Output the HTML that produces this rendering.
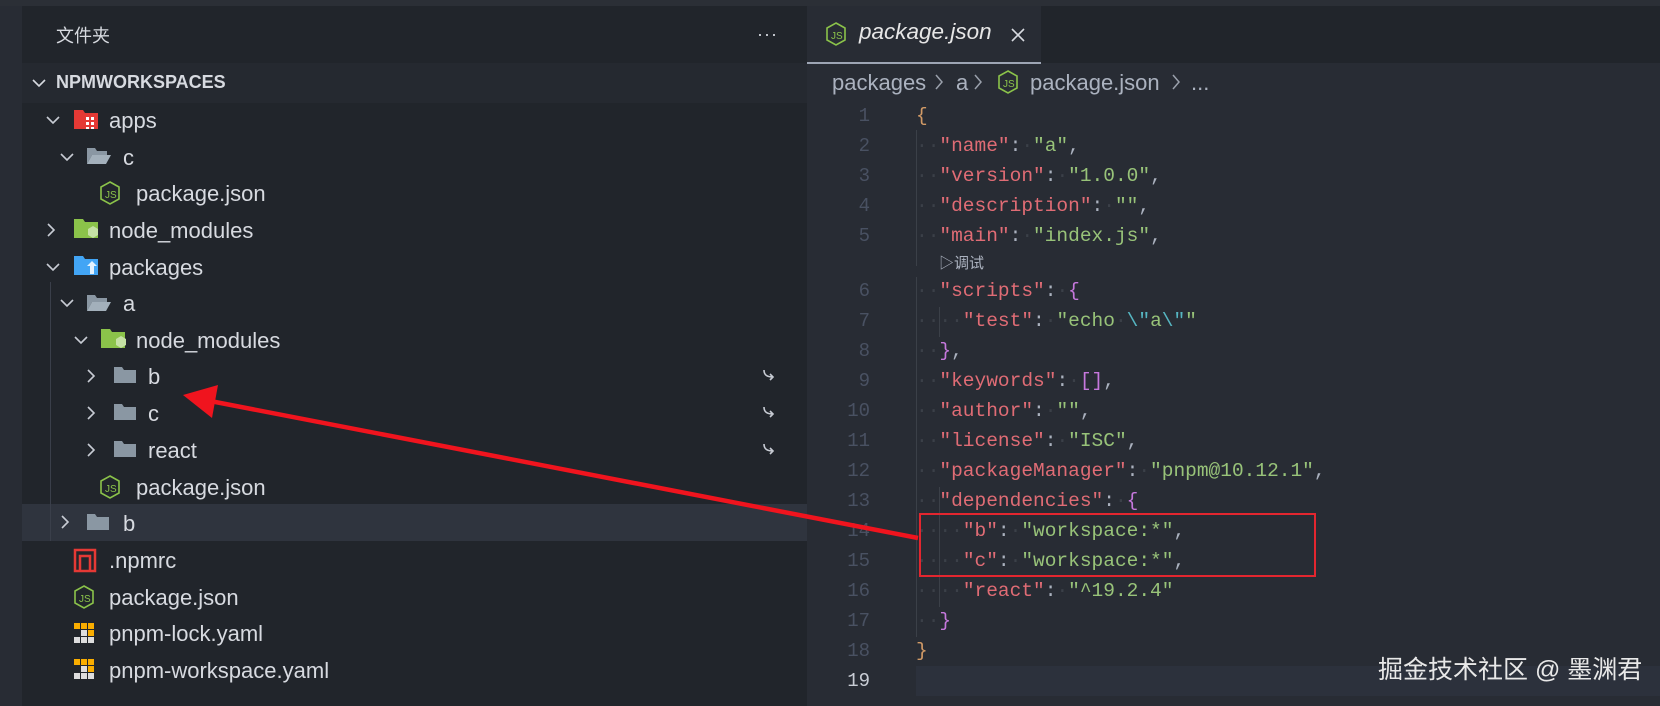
<!DOCTYPE html>
<html><head><meta charset="utf-8"><style>
*{margin:0;padding:0;box-sizing:border-box}
body{width:1660px;height:706px;background:#282c34;position:relative;overflow:hidden;font-family:"Liberation Sans","Noto Sans CJK SC",sans-serif;color:#d7dae0}
.abs{position:absolute}
#side{left:22px;top:6px;width:785px;height:700px;background:#21252b}
.row{position:absolute;left:22px;width:785px;height:37px;font-size:22px;line-height:37px;color:#d7dae0;white-space:nowrap}
.row>*{position:absolute;top:0}
.code{position:absolute;left:916px;font-family:"Liberation Mono",monospace;font-size:19.5px;white-space:pre;color:#abb2bf;line-height:30px;height:30px}
.ln{position:absolute;left:820px;width:50px;text-align:right;font-family:"Liberation Mono",monospace;font-size:19px;color:#495162;line-height:30px}
.k{color:#e06c75}.s{color:#98c379}.o{color:#d19a66}.p{color:#c678dd}.e{color:#56b6c2}.d{color:#3b4048}
.bc{position:absolute;top:68px;font-size:22px;color:#abb2bf;line-height:30px;white-space:nowrap}
</style></head><body>
<div class="abs" style="left:0;top:0;width:1660px;height:6px;background:#2b2f36"></div>
<div id="side" class="abs"></div>
<div class="abs" style="left:56px;top:22px;font-size:18px;color:#d7dae0">文件夹</div>
<div class="abs" style="left:757px;top:24px;font-size:18px;color:#d7dae0;letter-spacing:1px">···</div>
<div class="abs" style="left:22px;top:63px;width:785px;height:40px;background:#252930"></div>
<svg class="abs" style="left:32px;top:76px" width="14" height="14"><path d="M1 4l6 6 6-6" stroke="#d7dae0" stroke-width="1.6" fill="none"/></svg>
<div class="abs" style="left:56px;top:69px;font-size:18px;font-weight:bold;color:#d7dae0;line-height:26px">NPMWORKSPACES</div>
<div class="abs" style="left:22px;top:504px;width:785px;height:37px;background:#2f343e"></div>
<div class="abs" style="left:50px;top:282px;width:1px;height:259px;background:#3a3f4a"></div>

<svg class="abs" style="left:0;top:0" width="807" height="706" fill="none">
<defs>
<g id="down"><path d="M0 0l6 6 6-6" stroke="#c8ccd4" stroke-width="1.6"/></g>
<g id="right"><path d="M0 0l6 6-6 6" stroke="#c8ccd4" stroke-width="1.6"/></g>
<g id="fold"><path d="M0 2h8l2 3h12v13H0z" fill="#8a97a3"/></g>
<g id="fopen"><path d="M0 2h8l2 3h10v4H5L0 18z" fill="#8a97a3"/><path d="M5 9h19l-5 9H0z" fill="#a3b0bb"/></g>
<g id="js"><path d="M11 1l9 5v12l-9 5-9-5V6z" stroke="#8bc34a" stroke-width="1.6"/><text x="6" y="17" font-size="10" fill="#8bc34a" font-family="Liberation Sans">JS</text></g>
</defs>
<use href="#down" x="47" y="117"/>
<path d="M74 110h9l2 3h13v16H74z" fill="#e53935"/><g fill="#fff"><rect x="86" y="117" width="3" height="3"/><rect x="91" y="117" width="3" height="3"/><rect x="86" y="122" width="3" height="3"/><rect x="91" y="122" width="3" height="3"/><rect x="91" y="127" width="3" height="2"/><rect x="86" y="127" width="3" height="2"/></g>
<use href="#down" x="61" y="154"/><use href="#fopen" x="87" y="146"/>
<use href="#js" x="99" y="181"/>
<use href="#right" x="48" y="224"/>
<path d="M74 219h9l2 3h13v16H74z" fill="#8bc34a"/><path d="M93 226l5 3v6l-5 3-5-3v-6z" fill="#c5e1a5"/>
<use href="#down" x="47" y="264"/>
<path d="M74 256h9l2 3h13v16H74z" fill="#42a5f5"/><path d="M92 261l5 5h-3v8h-4v-8h-3z" fill="#e3f2fd"/>
<use href="#down" x="61" y="300"/><use href="#fopen" x="87" y="293"/>
<use href="#down" x="75" y="337"/>
<path d="M101 329h9l2 3h13v16h-24z" fill="#8bc34a"/><path d="M121 336l5 3v6l-5 3-5-3v-6z" fill="#c5e1a5"/>
<use href="#right" x="88" y="370"/><use href="#fold" x="114" y="365"/>
<use href="#right" x="88" y="407"/><use href="#fold" x="114" y="402"/>
<use href="#right" x="88" y="444"/><use href="#fold" x="114" y="439"/>
<use href="#js" x="99" y="475"/>
<use href="#right" x="62" y="516"/><use href="#fold" x="87" y="512"/>
<rect x="75" y="550" width="20" height="21" stroke="#e53935" stroke-width="2.5"/><path d="M80 571v-15h10v15" stroke="#e53935" stroke-width="2.5"/>
<use href="#js" x="73" y="585"/>
<g id="pn"><rect x="74" y="623" width="6" height="6" fill="#f9ad00"/><rect x="81" y="623" width="6" height="6" fill="#f9ad00"/><rect x="88" y="623" width="6" height="6" fill="#f9ad00"/><rect x="88" y="630" width="6" height="6" fill="#f9ad00"/><rect x="74" y="637" width="6" height="6" fill="#ddd"/><rect x="81" y="637" width="6" height="6" fill="#ddd"/><rect x="88" y="637" width="6" height="6" fill="#ddd"/><rect x="81" y="630" width="6" height="6" fill="#ddd"/></g>
<use href="#pn" x="0" y="36"/>
<g stroke="#c8ccd4" stroke-width="1.6"><path d="M764 370c0 5 3 7 9 7m-3-3l3 3-3 3"/><path d="M764 407c0 5 3 7 9 7m-3-3l3 3-3 3"/><path d="M764 444c0 5 3 7 9 7m-3-3l3 3-3 3"/></g>
</svg>
<div class="row" style="top:102px"><span style="left:87px">apps</span></div>
<div class="row" style="top:139px"><span style="left:101px">c</span></div>
<div class="row" style="top:175px"><span style="left:114px">package.json</span></div>
<div class="row" style="top:212px"><span style="left:87px">node_modules</span></div>
<div class="row" style="top:249px"><span style="left:87px">packages</span></div>
<div class="row" style="top:285px"><span style="left:101px">a</span></div>
<div class="row" style="top:322px"><span style="left:114px">node_modules</span></div>
<div class="row" style="top:358px"><span style="left:126px">b</span></div>
<div class="row" style="top:395px"><span style="left:126px">c</span></div>
<div class="row" style="top:432px"><span style="left:126px">react</span></div>
<div class="row" style="top:469px"><span style="left:114px">package.json</span></div>
<div class="row" style="top:505px"><span style="left:101px">b</span></div>
<div class="row" style="top:542px"><span style="left:87px">.npmrc</span></div>
<div class="row" style="top:579px"><span style="left:87px">package.json</span></div>
<div class="row" style="top:615px"><span style="left:87px">pnpm-lock.yaml</span></div>
<div class="row" style="top:652px"><span style="left:87px">pnpm-workspace.yaml</span></div>

<!-- editor -->
<div class="abs" style="left:807px;top:6px;width:853px;height:57px;background:#21252b"></div>
<div class="abs" style="left:807px;top:6px;width:234px;height:58px;background:#282c34;border-bottom:2px solid #9da5b4"></div>
<svg class="abs" style="left:825px;top:22px" width="24" height="26" fill="none"><path d="M11 1l9 5v12l-9 5-9-5V6z" stroke="#8bc34a" stroke-width="1.6"/><text x="6" y="17" font-size="10" fill="#8bc34a" font-family="Liberation Sans">JS</text></svg>
<div class="abs" style="left:859px;top:19px;font-size:22.5px;font-style:italic;color:#e6e6e6">package.json</div>
<svg class="abs" style="left:1010px;top:27px" width="16" height="16"><path d="M2 2l12 12M14 2L2 14" stroke="#d7dae0" stroke-width="1.6"/></svg>
<div class="bc" style="left:832px">packages</div>
<div class="bc" style="left:956px">a</div>
<div class="bc" style="left:1030px">package.json</div>
<div class="bc" style="left:1191px">...</div>
<svg class="abs" style="left:0;top:0" width="1660" height="110" fill="none" stroke="#9aa0ab" stroke-width="1.5">
<path d="M936 75l6 7-6 7M975 75l6 7-6 7M1173 75l6 7-6 7"/>
</svg>
<svg class="abs" style="left:997px;top:70px" width="24" height="26" fill="none"><path d="M11 1l9 5v12l-9 5-9-5V6z" stroke="#8bc34a" stroke-width="1.6"/><text x="6" y="17" font-size="10" fill="#8bc34a" font-family="Liberation Sans">JS</text></svg>

<div class="abs" style="left:916px;top:666px;width:744px;height:30px;background:#2c313c"></div>
<div class="abs" style="left:916px;top:130px;width:1px;height:136px;background:#3b4048"></div>
<div class="abs" style="left:916px;top:277px;width:1px;height:360px;background:#3b4048"></div>
<div class="abs" style="left:939px;top:307px;width:1px;height:30px;background:#3b4048"></div>
<div class="abs" style="left:939px;top:487px;width:1px;height:120px;background:#3b4048"></div>

<div class="ln" style="top:101px">1</div><div class="code" style="top:101px"><span class="o">{</span></div>
<div class="ln" style="top:131px">2</div><div class="code" style="top:131px"><span class="d">··</span><span class="k">"name"</span>:<span class="d">·</span><span class="s">"a"</span>,</div>
<div class="ln" style="top:161px">3</div><div class="code" style="top:161px"><span class="d">··</span><span class="k">"version"</span>:<span class="d">·</span><span class="s">"1.0.0"</span>,</div>
<div class="ln" style="top:191px">4</div><div class="code" style="top:191px"><span class="d">··</span><span class="k">"description"</span>:<span class="d">·</span><span class="s">""</span>,</div>
<div class="ln" style="top:221px">5</div><div class="code" style="top:221px"><span class="d">··</span><span class="k">"main"</span>:<span class="d">·</span><span class="s">"index.js"</span>,</div>
<div class="abs" style="left:939px;top:252px;font-size:15px;color:#abb2bf">▷调试</div>
<div class="ln" style="top:276px">6</div><div class="code" style="top:276px"><span class="d">··</span><span class="k">"scripts"</span>:<span class="d">·</span><span class="p">{</span></div>
<div class="ln" style="top:306px">7</div><div class="code" style="top:306px"><span class="d">····</span><span class="k">"test"</span>:<span class="d">·</span><span class="s">"echo<span class="d">·</span><span class="e">\"</span>a<span class="e">\"</span>"</span></div>
<div class="ln" style="top:336px">8</div><div class="code" style="top:336px"><span class="d">··</span><span class="p">}</span>,</div>
<div class="ln" style="top:366px">9</div><div class="code" style="top:366px"><span class="d">··</span><span class="k">"keywords"</span>:<span class="d">·</span><span class="p">[]</span>,</div>
<div class="ln" style="top:396px">10</div><div class="code" style="top:396px"><span class="d">··</span><span class="k">"author"</span>:<span class="d">·</span><span class="s">""</span>,</div>
<div class="ln" style="top:426px">11</div><div class="code" style="top:426px"><span class="d">··</span><span class="k">"license"</span>:<span class="d">·</span><span class="s">"ISC"</span>,</div>
<div class="ln" style="top:456px">12</div><div class="code" style="top:456px"><span class="d">··</span><span class="k">"packageManager"</span>:<span class="d">·</span><span class="s">"pnpm@10.12.1"</span>,</div>
<div class="ln" style="top:486px">13</div><div class="code" style="top:486px"><span class="d">··</span><span class="k">"dependencies"</span>:<span class="d">·</span><span class="p">{</span></div>
<div class="ln" style="top:516px">14</div><div class="code" style="top:516px"><span class="d">····</span><span class="k">"b"</span>:<span class="d">·</span><span class="s">"workspace:*"</span>,</div>
<div class="ln" style="top:546px">15</div><div class="code" style="top:546px"><span class="d">····</span><span class="k">"c"</span>:<span class="d">·</span><span class="s">"workspace:*"</span>,</div>
<div class="ln" style="top:576px">16</div><div class="code" style="top:576px"><span class="d">····</span><span class="k">"react"</span>:<span class="d">·</span><span class="s">"^19.2.4"</span></div>
<div class="ln" style="top:606px">17</div><div class="code" style="top:606px"><span class="d">··</span><span class="p">}</span></div>
<div class="ln" style="top:636px">18</div><div class="code" style="top:636px"><span class="o">}</span></div>
<div class="ln" style="top:666px;color:#c8ccd4">19</div>

<div class="abs" style="left:919px;top:513px;width:397px;height:64px;border:2px solid #e3262f"></div>

<svg class="abs" style="left:0;top:0" width="1660" height="706">
<path d="M918 538L205 400" stroke="#f0141e" stroke-width="4.5"/>
<path d="M183 395L218 385L212 418z" fill="#f0141e"/>
</svg>

<div class="abs" style="left:1378px;top:655px;font-size:25px;color:#e8e8e8;white-space:nowrap;line-height:30px">掘金技术社区 @ 墨渊君</div>
</body></html>
